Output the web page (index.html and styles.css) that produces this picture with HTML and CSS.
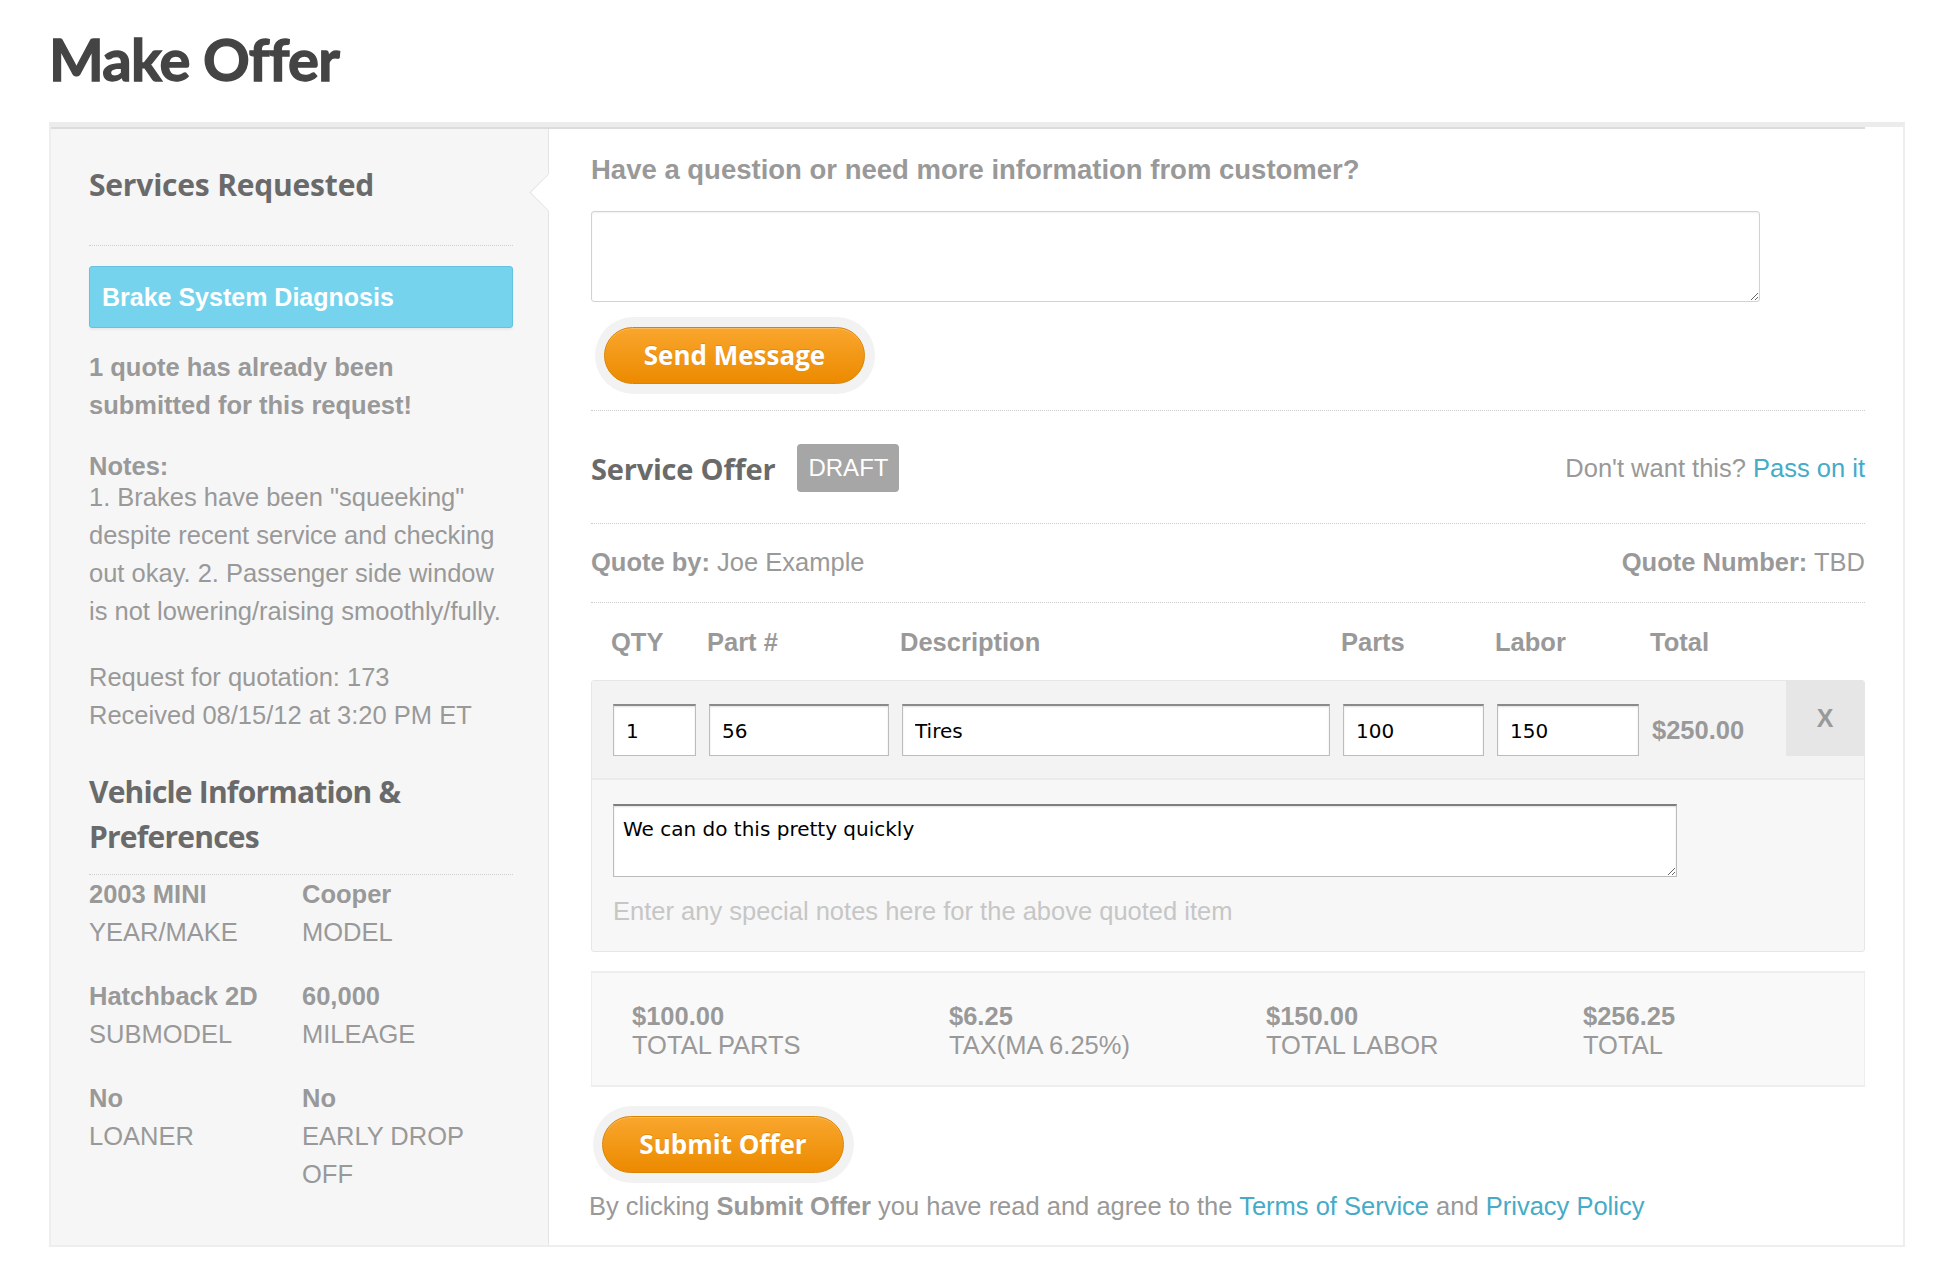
FILE: index.html
```html
<!DOCTYPE html>
<html lang="en">
<head>
<meta charset="utf-8">
<title>Make Offer</title>
<link rel="stylesheet" href="styles.css">
</head>
<body>
<div class="page">
  <h1 class="page-title">Make Offer</h1>
  <div class="frame">
    <div class="frame-row">
      <aside class="sidebar">
        <h2 class="side-title side-title--first">Services Requested</h2>
        <div class="dots dots--side-1"></div>
        <div class="service-pill">Brake System Diagnosis</div>
        <p class="side-text quote-count">1 quote has already been submitted for this request!</p>
        <div class="side-text notes-label">Notes:</div>
        <p class="side-text notes-text">1. Brakes have been "squeeking" despite recent service and checking out okay. 2. Passenger side window is not lowering/raising smoothly/fully.</p>
        <p class="side-text request-meta">Request for quotation: 173<br>Received 08/15/12 at 3:20 PM ET</p>
        <h2 class="side-title side-title--vehicle">Vehicle Information &amp; Preferences</h2>
        <div class="dots dots--side-2"></div>
        <div class="side-text vehicle-grid">
          <div class="vehicle-item"><strong>2003 MINI</strong><span>YEAR/MAKE</span></div>
          <div class="vehicle-item"><strong>Cooper</strong><span>MODEL</span></div>
          <div class="vehicle-item"><strong>Hatchback 2D</strong><span>SUBMODEL</span></div>
          <div class="vehicle-item"><strong>60,000</strong><span>MILEAGE</span></div>
          <div class="vehicle-item"><strong>No</strong><span>LOANER</span></div>
          <div class="vehicle-item"><strong>No</strong><span>EARLY DROP OFF</span></div>
        </div>
      </aside>
      <main class="main">
        <span class="notch"></span>
        <h3 class="ask-title">Have a question or need more information from customer?</h3>
        <textarea class="ask-box"></textarea>
        <div class="btn-halo btn-halo--send"><button class="btn-orange btn-orange--send">Send Message</button></div>
        <div class="dots dots--main-1"></div>
        <div class="offer-head">
          <div class="offer-title-wrap">
            <h2 class="offer-title">Service Offer</h2>
            <span class="badge">DRAFT</span>
          </div>
          <div class="pass">Don't want this? <a class="link" href="#">Pass on it</a></div>
        </div>
        <div class="dots dots--main-2"></div>
        <div class="quote-meta">
          <div><b>Quote by:</b> Joe Example</div>
          <div><b>Quote Number:</b> TBD</div>
        </div>
        <div class="dots dots--main-3"></div>
        <div class="line-grid line-head">
          <span>QTY</span><span>Part #</span><span>Description</span><span>Parts</span><span>Labor</span><span>Total</span><span></span>
        </div>
        <div class="line-item">
          <div class="line-grid line-fields">
            <input class="field" type="text" value="1">
            <input class="field" type="text" value="56">
            <input class="field" type="text" value="Tires">
            <input class="field" type="text" value="100">
            <input class="field" type="text" value="150">
            <span class="line-total">$250.00</span>
            <button class="remove" type="button">X</button>
          </div>
          <div class="line-notes">
            <textarea class="notes-box">We can do this pretty quickly</textarea>
            <p class="hint">Enter any special notes here for the above quoted item</p>
          </div>
        </div>
        <div class="totals">
          <div class="total-cell"><b>$100.00</b><span>TOTAL PARTS</span></div>
          <div class="total-cell"><b>$6.25</b><span>TAX(MA 6.25%)</span></div>
          <div class="total-cell"><b>$150.00</b><span>TOTAL LABOR</span></div>
          <div class="total-cell"><b>$256.25</b><span>TOTAL</span></div>
        </div>
        <div class="btn-halo btn-halo--submit"><button class="btn-orange btn-orange--submit">Submit Offer</button></div>
        <p class="legal">By clicking <b>Submit Offer</b> you have read and agree to the <a class="link" href="#">Terms of Service</a> and <a class="link" href="#">Privacy Policy</a></p>
      </main>
    </div>
  </div>
</div>
</body>
</html>
```

FILE: styles.css
```css
* { box-sizing: border-box; }

html, body {
  margin: 0;
  padding: 0;
  background: #fff;
}

body {
  font-family: "Liberation Sans", Arial, sans-serif;
  font-size: 25.5px;
  line-height: 38px;
  color: #999;
}

p { margin: 0; }
h1, h2, h3 { margin: 0; }

.page {
  padding-left: 49px;
  padding-right: 55px;
}

.page-title {
  font-family: Lato, "Open Sans", sans-serif;
  font-weight: 700;
  font-size: 58px;
  line-height: 58px;
  color: #444;
  margin: 30px 0 34px;
  letter-spacing: -0.8px;
  -webkit-text-stroke: 1.3px #444;
}

.frame {
  border: 2px solid #eeeeee;
  border-top: 5px solid #ececec;
  background: #fff;
}

.frame-row {
  display: flex;
  border-top: 2px solid #dcdcdc;
  margin-right: 38px;
}

/* ---------- sidebar ---------- */
.sidebar {
  width: 498px;
  flex: none;
  background: #f6f6f6;
  border-right: 1px solid #e4e4e4;
  padding: 0 35px 0 38px;
}

.side-text {
  padding-right: 9px;
}

.side-title {
  font-family: "Open Sans", Lato, sans-serif;
  font-weight: 700;
  font-size: 30px;
  color: #6a6a6a;
  letter-spacing: -0.2px;
}

.side-title--first {
  line-height: 36px;
  margin-top: 38px;
}

.side-title--vehicle {
  line-height: 45px;
  margin-top: 35px;
  padding-right: 40px;
  letter-spacing: -0.8px;
}

.dots {
  height: 0;
  border-top: 1px dotted #cdcdcd;
}

.dots--side-1 { margin-top: 42px; }
.dots--side-2 { margin-top: 15px; }

.service-pill {
  margin-top: 20px;
  height: 62px;
  line-height: 60px;
  padding: 0 12px;
  background: #76d3ed;
  border: 1px solid #62c4e1;
  border-radius: 3px;
  box-shadow: 0 2px 2px rgba(0, 0, 0, 0.05);
  color: #fff;
  font-weight: 700;
  font-size: 25px;
}

.quote-count {
  margin-top: 20px;
  font-weight: 700;
}

.notes-label {
  margin-top: 30px;
  font-weight: 700;
  line-height: 24px;
}

.request-meta {
  margin-top: 28px;
}

.vehicle-grid {
  display: grid;
  grid-template-columns: 213px 1fr;
  row-gap: 26px;
}

.vehicle-item strong {
  display: block;
  font-weight: 700;
}

.vehicle-item span {
  display: block;
}

/* ---------- main panel ---------- */
.main {
  position: relative;
  flex: 1;
  min-width: 0;
  padding: 0 0 20px 42px;
  background: #fff;
}

.notch {
  position: absolute;
  left: -14px;
  top: 50px;
  width: 27px;
  height: 27px;
  background: #fff;
  border-left: 1px solid #e4e4e4;
  border-bottom: 1px solid #e4e4e4;
  transform: rotate(45deg);
}

.ask-title {
  margin-top: 24px;
  font-family: "Liberation Sans", Arial, sans-serif;
  font-weight: 700;
  font-size: 27.5px;
  line-height: 34px;
  color: #999;
}

.ask-box {
  display: block;
  margin-top: 24px;
  width: 1169px;
  height: 91px;
  border: 1px solid #d2d2d2;
  border-radius: 3px;
  box-shadow: inset 0 1px 2px rgba(0, 0, 0, 0.06);
  background: #fff;
  font: inherit;
}

.btn-halo {
  width: fit-content;
  padding: 10px 10px 10px 9px;
  background: #f2f2f2;
  border-radius: 40px;
}

.btn-halo--send {
  margin: 15px 0 0 4px;
}

.btn-halo--submit {
  margin: 19px 0 0 2px;
}

.btn-orange {
  display: block;
  height: 57px;
  padding: 0;
  border: 1px solid #d98300;
  border-radius: 29px;
  background: linear-gradient(#f9a62d, #ec8a00);
  color: #fff;
  font-family: "Open Sans", "DejaVu Sans", sans-serif;
  font-weight: 700;
  font-size: 26px;
  line-height: 55px;
  text-shadow: 0 -1px 0 rgba(160, 80, 0, 0.25);
  box-shadow: inset 0 1px 0 rgba(255, 255, 255, 0.25);
}

.btn-orange--send { width: 261px; }
.btn-orange--submit { width: 242px; }

.dots--main-1 { margin-top: 16px; }
.dots--main-2 { margin-top: 31px; }
.dots--main-3 { margin-top: 21px; }

.offer-head {
  margin-top: 33px;
  height: 48px;
  display: flex;
  align-items: center;
  justify-content: space-between;
}

.offer-title-wrap {
  display: flex;
  align-items: center;
  gap: 22px;
}

.offer-title {
  font-family: "Open Sans", Lato, sans-serif;
  font-weight: 700;
  font-size: 29px;
  line-height: normal;
  color: #6a6a6a;
  letter-spacing: -0.2px;
}

.badge {
  height: 48px;
  line-height: 48px;
  padding: 0 11px;
  background: #a6a6a6;
  border-radius: 4px;
  color: #fff;
  font-size: 24px;
}

.pass {
  line-height: normal;
}

.link {
  color: #45abc7;
  text-decoration: none;
}

.quote-meta {
  margin-top: 19px;
  display: flex;
  justify-content: space-between;
}

.quote-meta b { font-weight: 700; }

.line-grid {
  display: grid;
  grid-template-columns: 83px 180px 428px 141px 142px 1fr 78px;
  column-gap: 13px;
}

.line-head {
  margin-top: 20px;
  padding-left: 20px;
  font-weight: 700;
}

.line-item {
  margin-top: 19px;
  border: 1px solid #e6e6e6;
  border-radius: 3px;
  background: #f7f7f7;
  overflow: hidden;
}

.line-fields {
  padding: 23px 0 22px 21px;
  background: #f3f3f3;
  border-bottom: 2px solid #ebebeb;
  align-items: center;
}

.field {
  height: 52px;
  width: 100%;
  padding: 0 12px;
  border: 1px solid #bcbcbc;
  border-top: 2px solid #8a8a8a;
  box-shadow: inset 0 1px 2px rgba(0, 0, 0, 0.12);
  background: #fff;
  font-family: "DejaVu Sans", sans-serif;
  font-size: 20px;
  color: #000;
  border-radius: 0;
}

.line-total {
  font-weight: 700;
}

.remove {
  align-self: start;
  margin-top: -23px;
  height: 75px;
  border: 0;
  padding: 0;
  background: #e6e6e6;
  color: #999;
  font-family: "Liberation Sans", Arial, sans-serif;
  font-weight: 700;
  font-size: 25px;
}

.line-notes {
  padding: 24px 21px 21px;
}

.notes-box {
  display: block;
  width: 1064px;
  height: 73px;
  padding: 10px 9px;
  border: 1px solid #bcbcbc;
  border-top: 2px solid #7e7e7e;
  box-shadow: inset 0 1px 2px rgba(0, 0, 0, 0.12);
  background: #fff;
  font-family: "DejaVu Sans", sans-serif;
  font-size: 20px;
  line-height: 26px;
  color: #000;
  resize: vertical;
}

.hint {
  margin-top: 15px;
  color: #c6c6c6;
}

.totals {
  margin-top: 19px;
  display: grid;
  grid-template-columns: 317px 317px 317px 1fr;
  padding: 29px 0 25px 40px;
  background: #f9f9f9;
  border: 1px solid #eeeeee;
  border-top-width: 2px;
  border-bottom-width: 2px;
  line-height: 29px;
}

.total-cell b {
  display: block;
  font-weight: 700;
}

.total-cell span {
  display: block;
}

.legal {
  margin-top: 4px;
  margin-left: -2px;
}

.legal b { font-weight: 700; }
```
